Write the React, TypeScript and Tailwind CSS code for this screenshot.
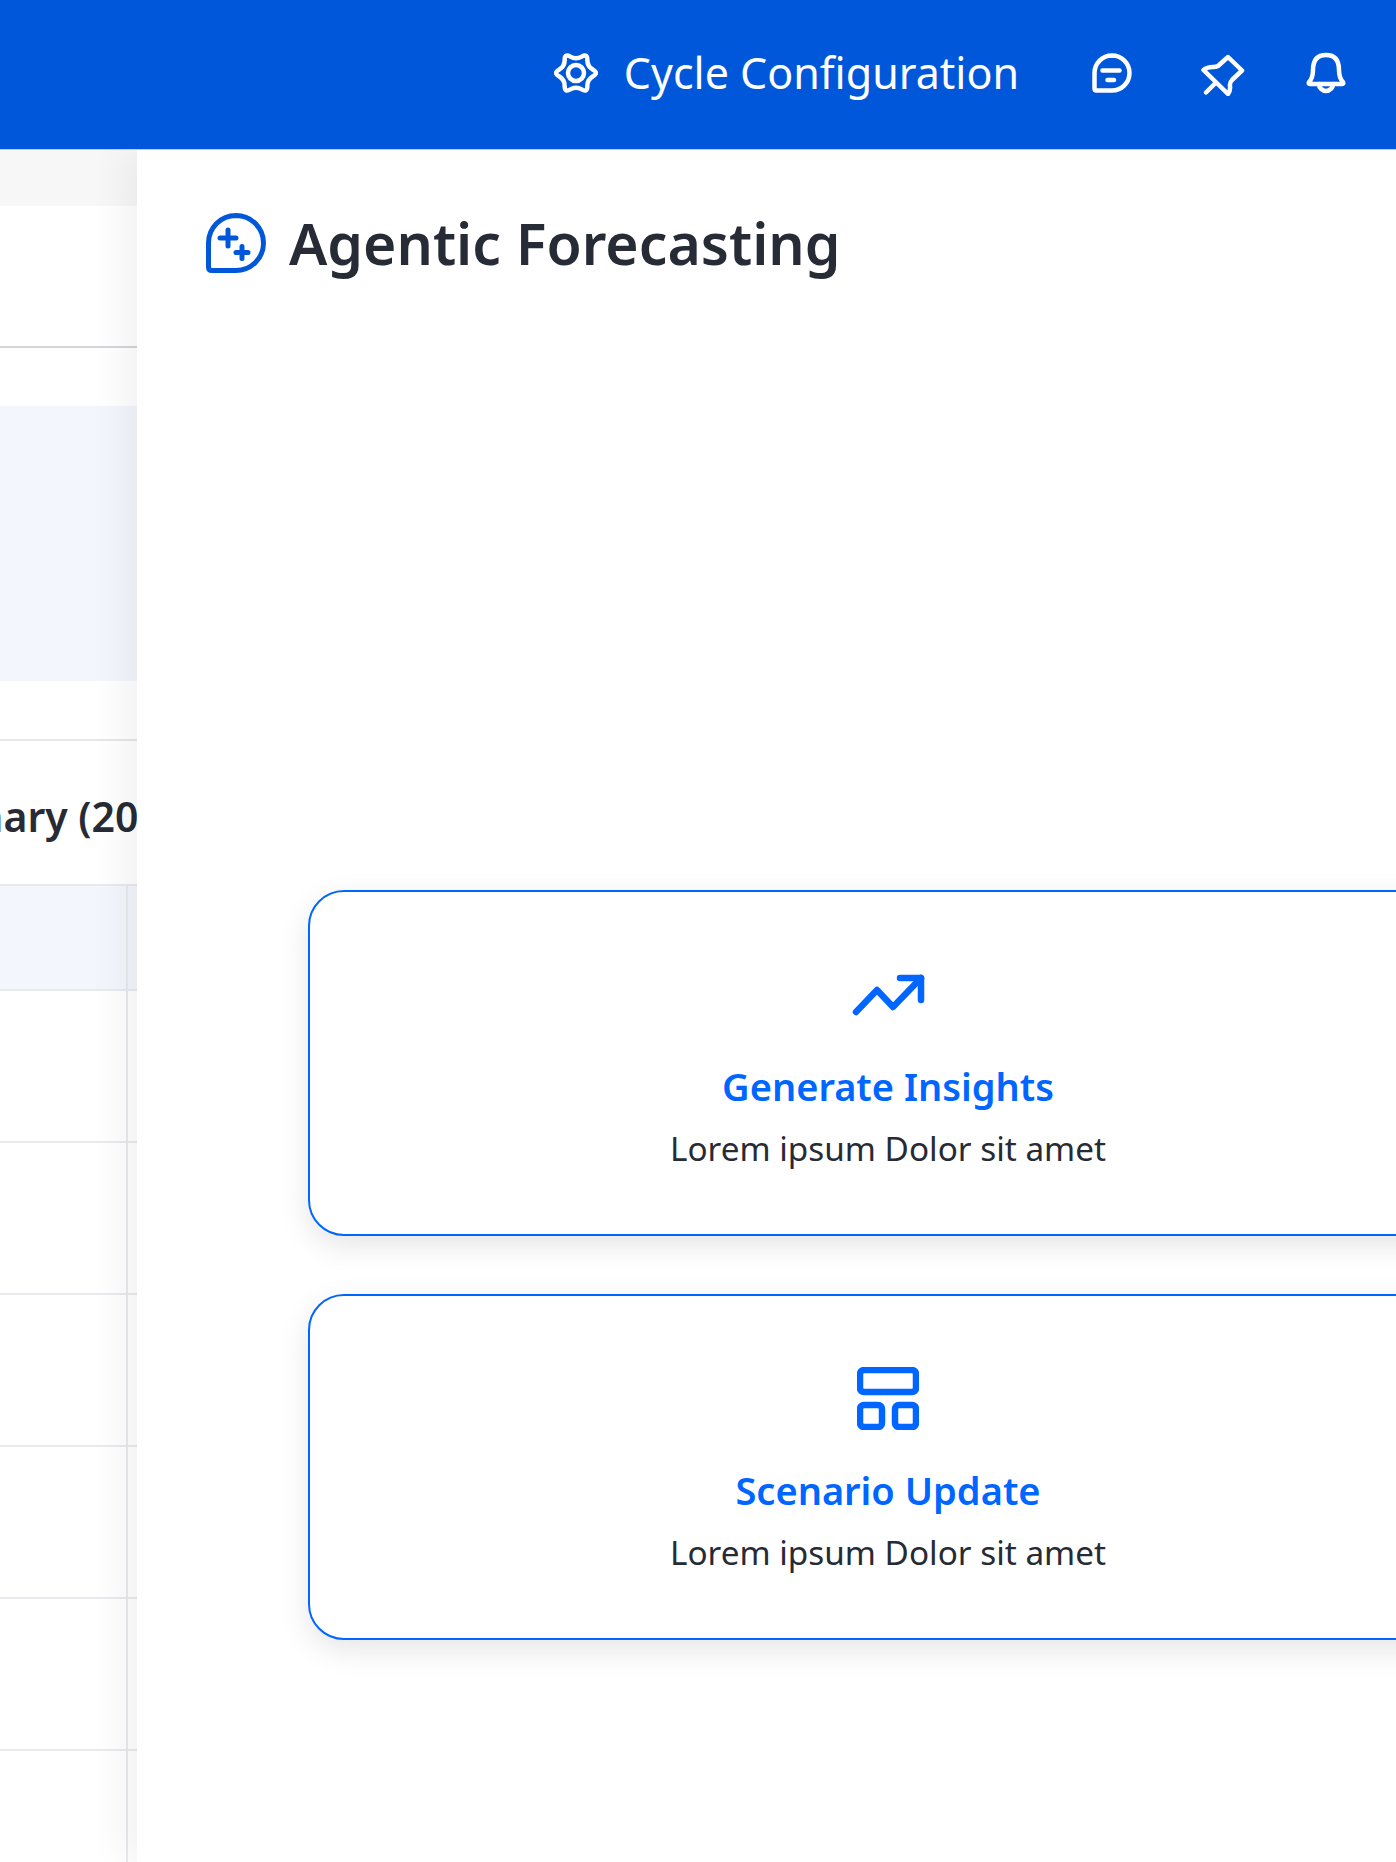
const gearPath = () => {
  // quadratic b-spline through alternating outer/inner control points, gives the wavy cog
  const pts: [number, number][] = [];
  for (let i = 0; i < 12; i++) {
    const r = i % 2 === 0 ? 22.8 : 13;
    const a = (i * Math.PI) / 6;
    pts.push([22 + r * Math.cos(a), 20 + r * Math.sin(a)]);
  }
  const mid = (a: [number, number], b: [number, number]) => [(a[0] + b[0]) / 2, (a[1] + b[1]) / 2];
  const start = mid(pts[11], pts[0]);
  let d = `M${start[0].toFixed(2)} ${start[1].toFixed(2)}`;
  pts.forEach((p, i) => {
    const m = mid(p, pts[(i + 1) % 12]);
    d += ` Q${p[0].toFixed(2)} ${p[1].toFixed(2)} ${m[0].toFixed(2)} ${m[1].toFixed(2)}`;
  });
  return d + ' Z';
};

function GearIcon() {
  return (
    <svg width="44" height="40" viewBox="0 0 44 40" fill="none" stroke="white" strokeWidth="4.5" strokeLinejoin="round">
      <path d={gearPath()} />
      <circle cx="22" cy="20" r="8" />
    </svg>
  );
}

function ChatIcon() {
  return (
    <svg width="40" height="40" viewBox="0 0 40 40" fill="none" stroke="white" strokeWidth="4.5" strokeLinecap="round" strokeLinejoin="round">
      <path d="M20 2.5 A17.5 17.5 0 0 1 20 37.5 H4.5 Q2.5 37.5 2.5 35.5 V20 A17.5 17.5 0 0 1 20 2.5 Z" />
      <path d="M10.5 17.5 H27.5" />
      <path d="M15.5 27 H22" />
    </svg>
  );
}

function PinIcon() {
  return (
    <svg width="48" height="46" viewBox="20 6 48 46" fill="none" stroke="white" strokeWidth="4.5" strokeLinecap="round" strokeLinejoin="round">
      <path d="M48 13 L62 26.5 L52 36 Q49.5 38.5 50 42 Q50.5 47 48 50 L23.5 26 Q27 23 33 23 Q36 23 38 22 Z" />
      <path d="M26 48.5 L35 39.5" />
    </svg>
  );
}

function BellIcon() {
  return (
    <svg width="50" height="50" viewBox="120 8 50 50" fill="none" stroke="white" strokeWidth="4.5" strokeLinecap="round" strokeLinejoin="round">
      <path d="M146 15 C136 15 133 22 133 30 C133 36 132 39 129 42 Q128 44 130 44 H162 Q164 44 163 42 C160 39 159 36 159 30 C159 22 156 15 146 15 Z" />
      <path d="M139 44 A7 7 0 0 0 153 44" />
    </svg>
  );
}

function AgentIcon() {
  return (
    <svg width="60" height="60" viewBox="0 0 60 60" fill="none" stroke="#0057d9" strokeWidth="5" strokeLinecap="round" strokeLinejoin="round" className="shrink-0">
      <path d="M30 2.5 A27.5 27.5 0 0 1 30 57.5 H6 Q2.5 57.5 2.5 54 V30 A27.5 27.5 0 0 1 30 2.5 Z" />
      <path d="M22 17 V33 M14 25 H30" />
      <path d="M36 33.5 V45.5 M30 39.5 H42" />
    </svg>
  );
}

function TrendIcon() {
  return (
    <svg width="76" height="46" viewBox="0 0 76 46" fill="none" stroke="#0066ff" strokeWidth="6.5" strokeLinecap="round" strokeLinejoin="round">
      <path d="M6 41 L27 19 L43 36 L71 7" />
      <path d="M50 7 H71 V29" />
    </svg>
  );
}

function LayoutIcon() {
  return (
    <svg width="62" height="63" viewBox="0 0 62 63" fill="none" stroke="#0066ff" strokeWidth="6.5">
      <rect x="3" y="3" width="56" height="22" rx="4" />
      <rect x="3" y="38" width="22" height="22" rx="4" />
      <rect x="38" y="38" width="21" height="22" rx="4" />
    </svg>
  );
}

function ActionCard({ icon, title }: { icon: React.ReactNode; title: string }) {
  return (
    <div className="w-[1160px] h-[346px] shrink-0 rounded-[36px] border-2 border-[#0066ff] bg-white shadow-[0_10px_30px_rgba(0,0,0,0.1)] flex flex-col items-center pt-[70px]">
      <div className="h-[64px] flex items-center justify-center">{icon}</div>
      <h3 className="mt-[36px] text-[38px] leading-[48px] font-semibold text-[#0066ff]">{title}</h3>
      <p className="mt-[14px] text-[33.3px] leading-[48px] text-[#272b35]">Lorem ipsum Dolor sit amet</p>
    </div>
  );
}

function TableRow({ head = false }: { head?: boolean }) {
  return (
    <div className={`flex border-b-2 border-[#e8eaed] ${head ? 'h-[105px] bg-[#f3f7fd]' : 'h-[152px]'}`}>
      <div className="w-[128px] shrink-0 border-r-2 border-[#e8eaed]" />
      <div className="flex-1" />
    </div>
  );
}

export default function App() {
  return (
    <div className="w-[1396px] h-[1862px] overflow-hidden bg-white flex flex-col font-['Noto_Sans',sans-serif]">
      <header className="relative z-20 h-[150px] shrink-0 bg-[#0057d9] border-b border-[#b5d0f3] flex items-center justify-end pb-[3px] pr-[46px]">
        <GearIcon />
        <span className="ml-[26px] mr-[73px] text-[43px] leading-[56px] text-white">Cycle Configuration</span>
        <ChatIcon />
        <div className="ml-[68px] mr-[52px]">
          <PinIcon />
        </div>
        <BellIcon />
      </header>

      <div className="flex flex-1 min-h-0">
        <aside className="w-[137px] shrink-0 overflow-hidden">
          <div className="h-[56px] bg-[#f7f7f7]" />
          <div className="h-[142px] border-b-2 border-[#d2d5d9]" />
          <div className="h-[58px]" />
          <div className="h-[275px] bg-[#f3f7fd]" />
          <div className="h-[60px] border-b-2 border-[#e5e7eb]" />
          <div className="h-[143px] flex items-center whitespace-nowrap pt-[8px]">
            <span className="-ml-[124px] text-[41px] font-semibold text-[#272b35]">Summary (2024)</span>
          </div>
          <div className="border-t-2 border-[#e8eaed]">
            <TableRow head />
            <TableRow />
            <TableRow />
            <TableRow />
            <TableRow />
            <TableRow />
            <TableRow />
          </div>
        </aside>

        <main className="relative z-10 flex-1 min-w-0 overflow-hidden bg-white shadow-[-12px_0_36px_rgba(0,0,0,0.06)] pt-[63px]">
          <div className="flex items-center gap-[23px] pl-[69px] h-[60px]">
            <AgentIcon />
            <h1 className="text-[57.1px] leading-[72px] font-semibold text-[#272b35] whitespace-nowrap">Agentic Forecasting</h1>
          </div>
          <div className="mt-[617px] ml-[171px] flex flex-col gap-[58px]">
            <ActionCard icon={<TrendIcon />} title="Generate Insights" />
            <ActionCard icon={<LayoutIcon />} title="Scenario Update" />
          </div>
        </main>
      </div>
    </div>
  );
}
